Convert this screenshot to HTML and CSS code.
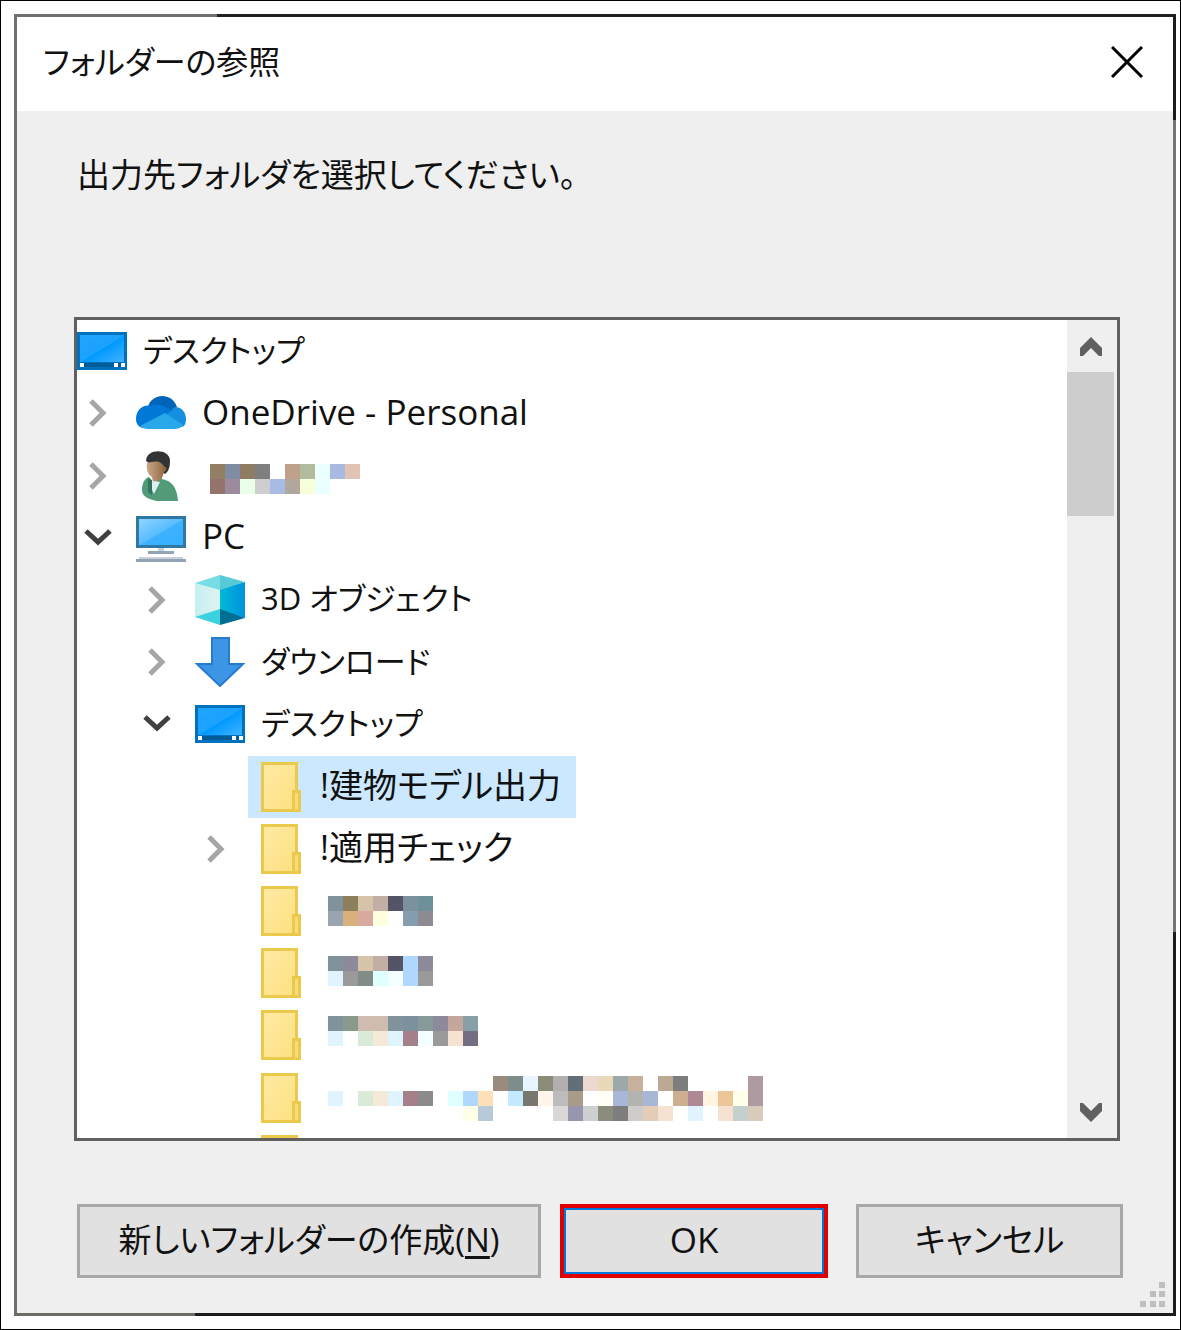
FILE: index.html
```html
<!DOCTYPE html>
<html lang="ja">
<head>
<meta charset="utf-8">
<meta name="viewport" content="width=device-width, initial-scale=1">
<title>フォルダーの参照</title>
<link rel="stylesheet" href="styles.css">
</head>
<body>
<svg class="defs" aria-hidden="true">
  <defs>
    <linearGradient id="screen" x1="0" y1="0" x2="1" y2="1">
      <stop offset="0" stop-color="#21a5ff"/><stop offset=".5" stop-color="#1aa2ff"/><stop offset=".52" stop-color="#0099ff"/><stop offset="1" stop-color="#42b3ff"/>
    </linearGradient>
    <linearGradient id="monitor" x1="0" y1="0" x2="1" y2="1">
      <stop offset="0" stop-color="#8fd3ff"/><stop offset=".5" stop-color="#58bdff"/><stop offset=".52" stop-color="#3db2ff"/><stop offset="1" stop-color="#35b0ff"/>
    </linearGradient>
    <linearGradient id="paper" x1="0" y1="0" x2="1" y2="1">
      <stop offset="0" stop-color="#ffeaa3"/><stop offset="1" stop-color="#fde082"/>
    </linearGradient>
    <linearGradient id="cube-left"><stop offset="0" stop-color="#c4eff0"/><stop offset="1" stop-color="#dff3f1"/></linearGradient>
    <linearGradient id="cube-right"><stop offset="0" stop-color="#00b9d8"/><stop offset="1" stop-color="#0092dc"/></linearGradient>
    <linearGradient id="face"><stop offset="0" stop-color="#c9a888"/><stop offset="1" stop-color="#8c633d"/></linearGradient>
    <symbol id="i-desktop" viewBox="0 0 50 50">
      <path fill="#0072bd" d="M0 6h50v38H0z"/><path fill="url(#screen)" d="M3 9h44v27H3z"/>
      <path fill="#005b96" d="M3 37h44v4H3z"/><path fill="#fff" d="M3 37h4v4H3zM37 37h4v4h-4zM44 37h4v4h-4z"/>
    </symbol>
    <symbol id="i-folder" viewBox="0 0 50 50">
      <path fill="#ebc94c" d="M7 0h37v28h3v22H7z"/><path fill="url(#paper)" d="M10 3h31v25h-3v19H10z"/><path fill="#fbdc78" d="M41 31h3v16h-3z"/>
    </symbol>
    <symbol id="i-right" viewBox="0 0 22 28">
      <path fill="none" stroke="#a6a6a6" stroke-width="5" d="M4 2l12 12L4 26"/>
    </symbol>
    <symbol id="i-down" viewBox="0 0 28 20">
      <path fill="none" stroke="#404040" stroke-width="5" d="M2 3l12 11L26 3"/>
    </symbol>
  </defs>
</svg>
<main class="page">
  <section class="dialog" role="dialog" aria-labelledby="dialog-title">
    <header class="titlebar">
      <h1 class="title" id="dialog-title">フォルダーの参照</h1>
      <button class="close" type="button" aria-label="閉じる">
        <svg width="32" height="32" viewBox="0 0 32 32"><path stroke="#000" stroke-width="3" d="M1 1l30 30M31 1L1 31"/></svg>
      </button>
    </header>
    <div class="content">
      <p class="prompt">出力先フォルダを選択してください。</p>
      <div class="tree">
        <ul class="items" role="tree">
          <li class="item level-0" role="treeitem"><span class="label"><svg class="icon"><use href="#i-desktop"/></svg><span class="name kana">デスクトップ</span></span></li>
          <li class="item level-1" role="treeitem">
            <button class="toggle" type="button" aria-label="展開"><svg width="22" height="28"><use href="#i-right"/></svg></button>
            <span class="label"><svg class="icon" viewBox="0 0 50 50">
              <path fill="#0064b8" d="M12 19C15 6 35 3 41 19L27 30z"/>
              <path fill="#0078d7" d="M0 31c0-9 7-15 15-13 9-4 16 1 22 7L7 40C2 39 0 35 0 31z"/>
              <path fill="#148fe0" d="M29 28l10-9c7 0 11 6 11 12 0 4-1 7-4 8z"/>
              <path fill="#28a8ea" d="M4 38l25-13 18 12c-2 3-5 4-9 4H12c-3 0-6-1-8-3z"/>
            </svg><span class="name latin">OneDrive - Personal</span></span>
          </li>
          <li class="item level-1" role="treeitem">
            <button class="toggle" type="button" aria-label="展開"><svg width="22" height="28"><use href="#i-right"/></svg></button>
            <span class="label"><svg class="icon" viewBox="0 0 50 50">
              <path fill="#333" d="M10 10C10-3 34-3 34 10c0 5-1 10-5 13z"/>
              <path fill="url(#face)" d="M11 12c5-1 10-3 14 0l4 4c2 0 2 3-1 5l-3 9-8 1-1-5c-4-2-6-8-5-14z"/>
              <path fill="#529b78" d="M13 26l5 6 8-4c10 2 15 8 16 22H21C11 48 6 45 6 39c0-7 3-12 7-13z"/>
              <path fill="#2f7659" d="M12 28l4 1v15l-4-3z"/><path fill="#dceff2" d="M16 30l8 1-3 6-3 6-2-4z"/>
            </svg><svg class="mosaic" width="150" viewBox="0 0 150 62"><g transform="translate(0 19) scale(15)">
              <rect x="0" y="0" fill="#938064"/><rect x="1" y="0" fill="#808ca2"/><rect x="2" y="0" fill="#8f7c62"/><rect x="3" y="0" fill="#7f7f7f"/><rect x="5" y="0" fill="#bda18b"/><rect x="6" y="0" fill="#b3bb9e"/><rect x="7" y="0" fill="#eaffff"/><rect x="8" y="0" fill="#a8b9e2"/><rect x="9" y="0" fill="#e2c2b2"/>
              <rect x="0" y="1" fill="#94746a"/><rect x="1" y="1" fill="#9c8b9c"/><rect x="2" y="1" fill="#eaffea"/><rect x="3" y="1" fill="#cecdd0"/><rect x="4" y="1" fill="#a8bbe4"/><rect x="5" y="1" fill="#b0a79d"/><rect x="6" y="1" fill="#f6ffda"/><rect x="7" y="1" fill="#eaffff"/>
            </g></svg></span>
          </li>
          <li class="item level-1" role="treeitem" aria-expanded="true">
            <button class="toggle" type="button" aria-label="折りたたむ"><svg width="28" height="20"><use href="#i-down"/></svg></button>
            <span class="label"><svg class="icon" viewBox="0 0 50 50">
              <path fill="#2f78a5" d="M0 3h50v32H0z"/><path fill="url(#monitor)" d="M3 6h44v26H3z"/>
              <path fill="#c8d0d7" d="M22 35h6v3h-6zM3 44h44v2H3z"/><path fill="#91a3b4" d="M12 38h26v3H12zM0 46h50v3H0z"/>
            </svg><span class="name latin">PC</span></span>
          </li>
          <li class="item level-2" role="treeitem">
            <button class="toggle" type="button" aria-label="展開"><svg width="22" height="28"><use href="#i-right"/></svg></button>
            <span class="label"><svg class="icon" viewBox="0 0 50 50">
              <path fill="url(#cube-left)" d="M0 8l25 5v23L0 43z"/><path fill="url(#cube-right)" d="M25 13l25-6v36l-25-7z"/>
              <path fill="#78dce4" d="M25 0v15L0 8z"/><path fill="#56cbd7" d="M25 0l25 7-25 8z"/>
              <path fill="#3bd2df" d="M0 42l25-8v16z"/><path fill="#006f94" d="M25 34v16l25-7z"/>
            </svg><span class="name kana">3D オブジェクト</span></span>
          </li>
          <li class="item level-2" role="treeitem">
            <button class="toggle" type="button" aria-label="展開"><svg width="22" height="28"><use href="#i-right"/></svg></button>
            <span class="label"><svg class="icon" viewBox="0 0 50 50"><path fill="#3d95e5" stroke="#267ccc" stroke-width="2" d="M17 1h17v26h14L25 49 2 27h15z"/></svg><span class="name kana">ダウンロード</span></span>
          </li>
          <li class="item level-2" role="treeitem" aria-expanded="true">
            <button class="toggle" type="button" aria-label="折りたたむ"><svg width="28" height="20"><use href="#i-down"/></svg></button>
            <span class="label"><svg class="icon"><use href="#i-desktop"/></svg><span class="name kana">デスクトップ</span></span>
          </li>
          <li class="item level-3" role="treeitem" aria-selected="true"><span class="toggle"></span><span class="label selected"><svg class="icon"><use href="#i-folder"/></svg><span class="name">!建物モデル出力</span></span></li>
          <li class="item level-3" role="treeitem">
            <button class="toggle" type="button" aria-label="展開"><svg width="22" height="28"><use href="#i-right"/></svg></button>
            <span class="label"><svg class="icon"><use href="#i-folder"/></svg><span class="name">!適用チェック</span></span>
          </li>
          <li class="item level-3" role="treeitem"><span class="toggle"></span><span class="label"><svg class="icon"><use href="#i-folder"/></svg><svg class="mosaic" width="105" viewBox="0 0 105 62"><g transform="translate(0 16) scale(15)">
            <rect x="0" y="0" fill="#80939a"/><rect x="1" y="0" fill="#8c805c"/><rect x="2" y="0" fill="#d6c3aa"/><rect x="3" y="0" fill="#c2aea4"/><rect x="4" y="0" fill="#555366"/><rect x="5" y="0" fill="#7b929e"/><rect x="6" y="0" fill="#6d9099"/>
            <rect x="0" y="1" fill="#9aa5b1"/><rect x="1" y="1" fill="#d9af7d"/><rect x="2" y="1" fill="#d8a99e"/><rect x="3" y="1" fill="#ffffe0"/><rect x="5" y="1" fill="#869cb0"/><rect x="6" y="1" fill="#8d8b91"/>
          </g></svg></span></li>
          <li class="item level-3" role="treeitem"><span class="toggle"></span><span class="label"><svg class="icon"><use href="#i-folder"/></svg><svg class="mosaic" width="105" viewBox="0 0 105 62"><g transform="translate(0 14) scale(15)">
            <rect x="0" y="0" fill="#80939a"/><rect x="1" y="0" fill="#8d8b9b"/><rect x="2" y="0" fill="#d6c3aa"/><rect x="3" y="0" fill="#c2aea4"/><rect x="4" y="0" fill="#555366"/><rect x="5" y="0" fill="#b0d8ff"/><rect x="6" y="0" fill="#8d8b9b"/>
            <rect x="0" y="1" fill="#e0f4ff"/><rect x="1" y="1" fill="#9a9a9a"/><rect x="2" y="1" fill="#818b88"/><rect x="3" y="1" fill="#e0ffff"/><rect x="4" y="1" fill="#f4ffff"/><rect x="5" y="1" fill="#b0d8ff"/><rect x="6" y="1" fill="#9a9a9a"/>
          </g></svg></span></li>
          <li class="item level-3" role="treeitem"><span class="toggle"></span><span class="label"><svg class="icon"><use href="#i-folder"/></svg><svg class="mosaic" width="150" viewBox="0 0 150 62"><g transform="translate(0 12) scale(15)">
            <rect x="0" y="0" fill="#80939a"/><rect x="1" y="0" fill="#889a8b"/><rect x="2" y="0" fill="#d0bbb1"/><rect x="3" y="0" fill="#d0bbb1"/><rect x="4" y="0" fill="#80939a"/><rect x="5" y="0" fill="#7b929e"/><rect x="6" y="0" fill="#879999"/><rect x="7" y="0" fill="#8d8b9b"/><rect x="8" y="0" fill="#c4a69d"/><rect x="9" y="0" fill="#889fa6"/>
            <rect x="0" y="1" fill="#e0f4ff"/><rect x="2" y="1" fill="#d9ead8"/><rect x="3" y="1" fill="#f5e9d7"/><rect x="4" y="1" fill="#e0f4ff"/><rect x="5" y="1" fill="#a4808a"/><rect x="6" y="1" fill="#f4ffff"/><rect x="7" y="1" fill="#9a9a9a"/><rect x="8" y="1" fill="#f5e2d0"/><rect x="9" y="1" fill="#756d82"/>
          </g></svg></span></li>
          <li class="item level-3" role="treeitem"><span class="toggle"></span><span class="label"><svg class="icon"><use href="#i-folder"/></svg><svg class="mosaic" width="435" viewBox="0 0 435 62"><g transform="translate(0 9) scale(15)">
            <rect x="11" y="0" fill="#998c7f"/><rect x="12" y="0" fill="#7d8d8c"/><rect x="13" y="0" fill="#e8f4ff"/><rect x="14" y="0" fill="#8b8c78"/><rect x="15" y="0" fill="#b3afae"/><rect x="16" y="0" fill="#626e78"/><rect x="17" y="0" fill="#ebd9d0"/><rect x="18" y="0" fill="#e9d9b9"/><rect x="19" y="0" fill="#9da8a8"/><rect x="20" y="0" fill="#c7b09c"/><rect x="22" y="0" fill="#bca994"/><rect x="23" y="0" fill="#7d7d7d"/><rect x="28" y="0" fill="#af9aa2"/>
            <rect x="0" y="1" fill="#e0f4ff"/><rect x="2" y="1" fill="#d9ead8"/><rect x="3" y="1" fill="#f5e9d7"/><rect x="4" y="1" fill="#e0f4ff"/><rect x="5" y="1" fill="#a4808a"/><rect x="6" y="1" fill="#8b8b8b"/><rect x="8" y="1" fill="#e0ffff"/><rect x="9" y="1" fill="#b0d8ff"/><rect x="10" y="1" fill="#ffe0b8"/><rect x="12" y="1" fill="#c4eaff"/><rect x="13" y="1" fill="#787870"/><rect x="14" y="1" fill="#fff5ea"/><rect x="15" y="1" fill="#bdbcbd"/><rect x="16" y="1" fill="#a89c88"/><rect x="18" y="1" fill="#fffff5"/><rect x="19" y="1" fill="#a8b7d6"/><rect x="20" y="1" fill="#b3b3af"/><rect x="21" y="1" fill="#a8b7d6"/><rect x="23" y="1" fill="#ceae90"/><rect x="24" y="1" fill="#ae8894"/><rect x="25" y="1" fill="#fff5e0"/><rect x="26" y="1" fill="#ecc598"/><rect x="27" y="1" fill="#ffffea"/><rect x="28" y="1" fill="#af9aa2"/>
            <rect x="9" y="2" fill="#ffffe8"/><rect x="10" y="2" fill="#b8cad8"/><rect x="15" y="2" fill="#d9d7d8"/><rect x="16" y="2" fill="#9796ae"/><rect x="17" y="2" fill="#cecfd0"/><rect x="18" y="2" fill="#8b8c7d"/><rect x="19" y="2" fill="#7d7d7d"/><rect x="20" y="2" fill="#cecdcc"/><rect x="21" y="2" fill="#e4ccb6"/><rect x="22" y="2" fill="#f5e2d0"/><rect x="24" y="2" fill="#e0f4ff"/><rect x="26" y="2" fill="#f5e2d0"/><rect x="27" y="2" fill="#c3d0ce"/><rect x="28" y="2" fill="#d8cbb9"/>
          </g></svg></span></li>
          <li class="item level-3" role="treeitem"><span class="toggle"></span><span class="label"><svg class="icon"><use href="#i-folder"/></svg></span></li>
        </ul>
        <div class="scrollbar">
          <button class="arrow" type="button" aria-label="上へスクロール"><svg width="22" height="19" viewBox="0 0 22 19"><path fill="#606060" d="M11 0l11 11v8h-3l-8-8-8 8H0v-8z"/></svg></button>
          <div class="thumb"></div>
          <button class="arrow" type="button" aria-label="下へスクロール"><svg width="22" height="19" viewBox="0 0 22 19"><path fill="#606060" d="M11 19L0 8V0h3l8 8 8-8h3v8z"/></svg></button>
        </div>
      </div>
      <footer class="actions">
        <button class="button create" type="button">新しいフォルダーの作成(<u>N</u>)</button>
        <button class="button ok latin" type="button">OK</button>
        <button class="button cancel" type="button">キャンセル</button>
      </footer>
      <svg class="grip" width="26" height="26" viewBox="0 0 26 26" aria-hidden="true"><path fill="#bfbfbf" d="M19 0h6v6h-6zM10 9h6v6h-6zM19 9h6v6h-6zM0 19h6v6H0zM10 19h6v6h-6zM19 19h6v6h-6z"/></svg>
    </div>
  </section>
</main>
</body>
</html>
```
FILE: styles.css
```css
* {
  box-sizing: border-box;
}

body {
  margin: 0;
  background: #fff;
  color: #111;
  font-family: "Open Sans", "Noto Sans CJK JP", sans-serif;
  font-size: 33px;
  line-height: 48px;
  font-feature-settings: "palt";
}

button {
  padding: 0;
  border: 0;
  background: none;
  color: inherit;
  font: inherit;
  font-feature-settings: inherit;
}

svg {
  display: block;
}

.defs {
  position: absolute;
  width: 0;
  height: 0;
}

.page {
  display: flex;
  min-height: 100vh;
  padding: 13px 4px 13px 13px;
  border: 1px solid #000;
}

/* The window edge changes shade along each side. */
.dialog {
  display: flex;
  flex: 1;
  flex-direction: column;
  min-width: 0;
  padding: 3px;
  background:
    linear-gradient(90deg, #707070 203px, #1f2220 203px) top / 100% 3px no-repeat,
    linear-gradient(90deg, #6b6b66 181px, #1c1c1c 181px) bottom / 100% 3px no-repeat,
    linear-gradient(#1c1c1c 106px, #767676 106px, #767676 918px, #1c1c1c 918px) right / 3px 100% no-repeat,
    #707070;
}

.titlebar {
  display: flex;
  align-items: center;
  justify-content: space-between;
  height: 94px;
  padding: 0 30px 4px 26px;
  background: #fff;
}

.title {
  margin: 0;
  font-size: 32px;
  font-weight: 400;
}

.content {
  position: relative;
  display: flex;
  flex: 1;
  flex-direction: column;
  padding: 40px 50px 34px 57px;
  background: #efefef;
}

.prompt {
  margin: 0 0 118px 3px;
}

.tree {
  display: flex;
  height: 824px;
  margin-right: 3px;
  overflow: hidden;
  border: 3px solid #606060;
  background: #fff;
}

.items {
  display: grid;
  flex: 1;
  grid-template-rows: repeat(14, 1fr);
  height: 871px;
  margin: 0;
  padding: 0;
  list-style: none;
}

.item {
  display: flex;
  min-height: 0;
}

.level-2 {
  padding-left: 59px;
}

.level-3 {
  padding-left: 118px;
}

.toggle {
  display: flex;
  align-items: center;
  justify-content: center;
  width: 53px;
  padding-right: 12px;
}

.label {
  display: flex;
  align-items: center;
  gap: 16px;
  padding: 0 15px 0 6px;
}

.level-0 .label {
  padding-left: 0;
}

.selected {
  background: #cce8ff;
}

.icon {
  width: 50px;
  height: 50px;
}

.name {
  padding-bottom: 3px;
  font-size: 34px;
  white-space: nowrap;
}

.kana {
  font-size: 31px;
}

.latin {
  font-size: 35px;
}

.mosaic {
  height: 62px;
  margin-left: 8px;
  shape-rendering: crispEdges;
}

.mosaic rect {
  width: 1px;
  height: 1px;
}

.scrollbar {
  display: flex;
  flex-direction: column;
  width: 50px;
  padding-right: 3px;
  background: #efefef;
}

.arrow {
  display: grid;
  place-items: center;
  height: 52px;
}

.thumb {
  height: 144px;
  margin-bottom: auto;
  background: #cdcdcd;
}

.actions {
  display: flex;
  margin: 63px 0 0 3px;
}

.button {
  height: 74px;
  padding-bottom: 2px;
  border: 3px solid #a8a8a8;
  background: #e1e1e1;
}

.create {
  flex: 1 1 464px;
}

.ok {
  flex: 1 1 268px;
  margin: 0 28px 0 19px;
  border: 4px solid #e00000;
  box-shadow: inset 0 0 0 2px #0078d7;
}

.cancel {
  flex: 1 1 267px;
}

.button u {
  text-decoration-thickness: 3px;
  text-underline-offset: 4px;
}

.grip {
  position: absolute;
  right: 7px;
  bottom: 5px;
}
```
